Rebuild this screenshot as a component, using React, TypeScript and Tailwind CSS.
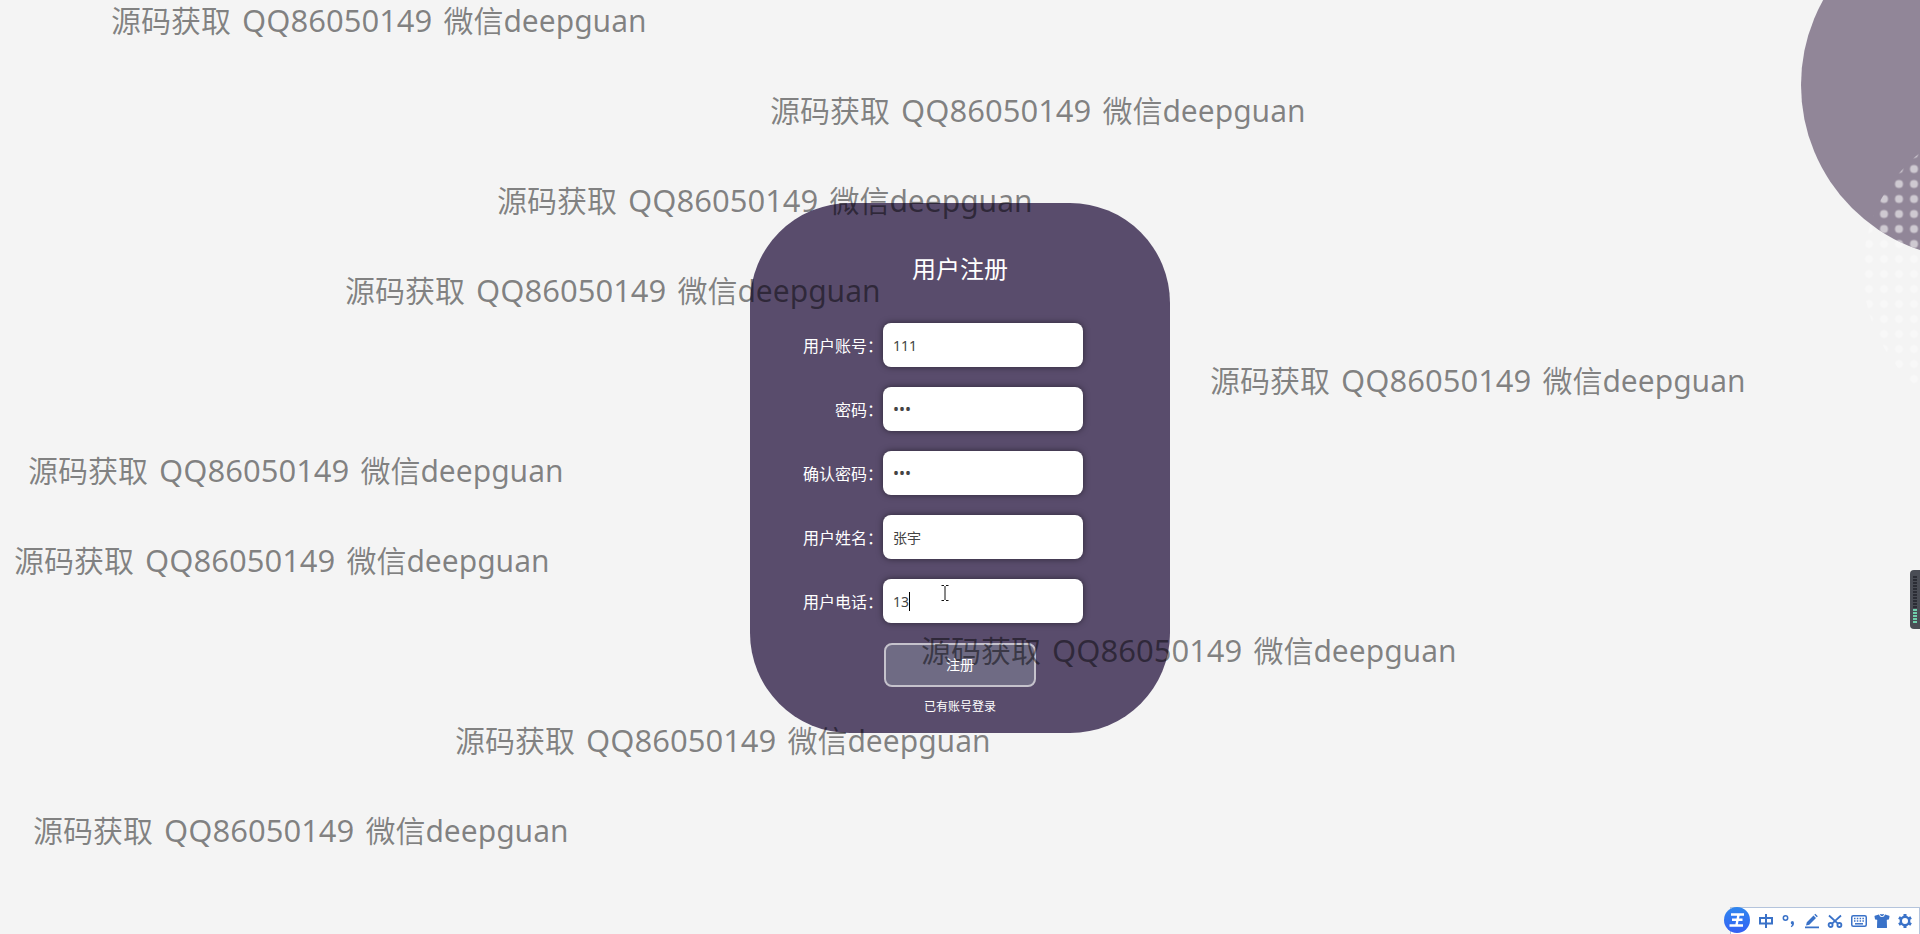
import React, { useState } from "react";
import { IoShirt } from "react-icons/io5";

const watermarkRows = [
  "pl-[111px]",
  "pl-[770px]",
  "pl-[497px]",
  "pl-[345px]",
  "pl-[1210px]",
  "pl-[28px]",
  "pl-[14px]",
  "pl-[921px]",
  "pl-[455px]",
  "pl-[33px]",
];

function Watermarks() {
  return (
    <div
      aria-hidden="true"
      className="pointer-events-none absolute inset-0 overflow-hidden text-[30px] leading-10 text-black/47"
    >
      {watermarkRows.map((indent) => (
        <div key={indent} className={`h-[90px] whitespace-nowrap ${indent}`}>
          源码获取<span className="mx-[3px] text-[31px]"> QQ86050149 </span>微信deepguan
        </div>
      ))}
    </div>
  );
}

function CornerDecoration() {
  return (
    <svg
      aria-hidden="true"
      className="absolute top-0 right-0 h-[400px] w-[120px]"
      viewBox="1800 0 120 400"
    >
      <defs>
        <pattern id="dots" x="1876.5" y="161.5" width="15" height="15" patternUnits="userSpaceOnUse">
          <circle cx="7.5" cy="7.5" r="4" fill="#fff" />
        </pattern>
        <clipPath id="disc">
          <circle cx="1975" cy="85" r="174" />
        </clipPath>
      </defs>
      <circle cx="2014" cy="271" r="151" fill="url(#dots)" opacity="0.35" />
      <circle cx="1975" cy="85" r="174" fill="#918698" />
      <g clipPath="url(#disc)">
        <circle cx="2014" cy="271" r="151" fill="url(#dots)" opacity="0.55" />
      </g>
    </svg>
  );
}

interface FieldProps {
  id: string;
  label: string;
  type?: string;
  initial: string;
  active?: boolean;
}

function Field({ id, label, type = "text", initial, active }: FieldProps) {
  const [value, setValue] = useState(initial);
  return (
    <div className="mb-5 flex h-11 items-center">
      <label htmlFor={id} className="w-[133px] pt-0.5 text-right text-base text-white">
        {label}：
      </label>
      <div className="relative">
        <input
          id={id}
          type={type}
          value={value}
          onChange={(e) => setValue(e.target.value)}
          className={`block h-11 w-[200px] rounded-lg bg-white px-2.5 text-[#444] shadow-[0_0_6px_rgba(0,0,0,0.5)] outline-none ${
            type === "password" ? "text-base" : "text-sm"
          }`}
        />
        {active && (
          <>
            <span className="absolute top-[13px] left-[26px] h-[19px] w-px bg-black" />
            <svg aria-hidden="true" className="absolute top-1.5 left-[58px] h-4 w-2" viewBox="0 0 8 16">
              <path d="M.5 .5H3M5 .5H7.5M.5 15.5H3M5 15.5H7.5M4 1V15" stroke="#111" fill="none" />
            </svg>
          </>
        )}
      </div>
    </div>
  );
}

function InputMethodBar() {
  return (
    <div className="absolute right-0 bottom-0 flex h-[27px] w-[190px] items-center justify-between border border-b-0 border-[#b4c4dc] bg-white pr-1.5 pl-[27px] text-[#3a72c8]">
      <span className="absolute bottom-px -left-[7px] flex size-[26px] items-center justify-center rounded-full bg-linear-to-b from-[#2f86ee] to-[#3560f4]">
        <svg aria-hidden="true" className="size-[18px]" viewBox="0 0 18 18" fill="none" stroke="#fff" strokeWidth="2.4">
          <path d="M3 3.500H16M4 8.800H14.500M1.500 14.500H15M10.500 4L8.500 14" />
        </svg>
      </span>
      <svg aria-hidden="true" className="size-4" viewBox="0 0 16 16" fill="none" stroke="currentColor" strokeWidth="2">
        <path d="M2 5H14V10.500H2ZM8 1V15" />
      </svg>
      <svg aria-hidden="true" className="size-4" viewBox="0 0 16 16">
        <circle cx="4.500" cy="5" r="2.200" fill="none" stroke="currentColor" strokeWidth="1.500" />
        <path d="M11 8a2 2 0 0 1 2 2.200c0 2-1 3.300-2.700 4l-.500-1c.900-.500 1.300-1 1.300-1.600A1.900 1.900 0 0 1 11 8Z" fill="currentColor" />
      </svg>
      <svg aria-hidden="true" className="size-4" viewBox="0 0 16 16" fill="currentColor">
        <path d="M2 12.500L2.800 9.200L9.500 2.500L12 5L5.300 11.700ZM10.300 1.700L11.300 .8L13.800 3.200L12.800 4.200ZM1 13.500H15V15.200H1Z" />
      </svg>
      <svg aria-hidden="true" className="size-4" viewBox="0 0 16 16" fill="none" stroke="currentColor" strokeWidth="1.800">
        <path d="M2 2.500L11.200 10.800M14 2.500L4.800 10.800" />
        <circle cx="3.600" cy="12" r="2" />
        <circle cx="12.400" cy="12" r="2" />
      </svg>
      <svg aria-hidden="true" className="size-4" viewBox="0 0 16 16" fill="none" stroke="currentColor" strokeWidth="1.500">
        <rect x=".750" y="2.750" width="14.500" height="10.500" rx="1.500" />
        <path d="M3 5.500H13M3 8H13" strokeDasharray="1.500 1.300" />
        <path d="M4 10.800H12" />
      </svg>
      <IoShirt className="size-4" />
      <svg aria-hidden="true" className="size-4" viewBox="0 0 16 16" fill="none" stroke="currentColor">
        <circle cx="8" cy="8" r="4.200" strokeWidth="2.400" />
        <path d="M8 1V3.200M8 12.800V15M1.900 4.500L3.900 5.600M12.100 10.400L14.100 11.500M1.900 11.500L3.900 10.400M12.100 5.600L14.100 4.500" strokeWidth="3" />
      </svg>
    </div>
  );
}

function LevelMeter() {
  return (
    <div className="absolute top-[570px] right-0 flex h-[59px] w-2.5 flex-col items-center rounded-l-sm bg-[#4a4d55] pt-1.5">
      <svg aria-hidden="true" className="h-12 w-1" viewBox="0 0 4 48">
        <path d="M2 0V32" stroke="#2b2d35" strokeWidth="4" strokeDasharray="2 1" />
        <path d="M2 33V48" stroke="#6fd0ac" strokeWidth="4" strokeDasharray="2 1" />
      </svg>
    </div>
  );
}

export default function App() {
  return (
    <main className="relative flex min-h-screen items-center justify-center overflow-hidden bg-[#f4f4f4] font-['Noto_Sans','Noto_Sans_CJK_SC',sans-serif]">
      <CornerDecoration />
      <form
        onSubmit={(e) => e.preventDefault()}
        className="mt-0.5 flex w-[420px] flex-col rounded-[100px] bg-[#594c6c] pt-12 pb-4"
      >
        <h1 className="mb-9 text-center text-2xl leading-9 text-white">用户注册</h1>
        <Field id="account" label="用户账号" initial="111" />
        <Field id="password" label="密码" type="password" initial="111" />
        <Field id="confirm" label="确认密码" type="password" initial="111" />
        <Field id="name" label="用户姓名" initial="张宇" />
        <Field id="phone" label="用户电话" initial="13" active />
        <button
          type="submit"
          className="h-11 w-[152px] self-center rounded-lg border-2 border-[#c5c2cc] bg-[#6f6b84] text-sm text-white"
        >
          <span className="relative z-10">注册</span>
        </button>
        <a href="#login" className="mt-2.5 self-center text-xs leading-5 text-white">
          已有账号登录
        </a>
      </form>
      <Watermarks />
      <LevelMeter />
      <InputMethodBar />
    </main>
  );
}
